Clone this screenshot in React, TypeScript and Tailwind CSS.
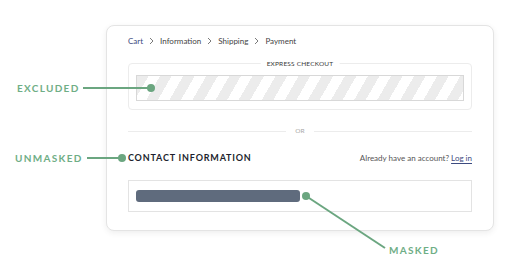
import React from 'react';

const Chevron: React.FC = () => (
  <svg width="5" height="8" viewBox="0 0 5 8" fill="none" stroke="#7a7a7a" strokeWidth="1" className="shrink-0">
    <path d="M1 1l3 3-3 3" />
  </svg>
);

const App: React.FC = () => {
  const steps = ['Information', 'Shipping', 'Payment'];

  return (
    <div className="relative w-[524px] h-[267px] overflow-hidden bg-white pl-[106px] pt-[25px] font-['Lato',sans-serif]">
      <div className="w-[388px] rounded-[8px] border border-[#e4e4e4] bg-white px-[21px] pt-[8px] pb-[18px] shadow-[0_2px_6px_rgba(0,0,0,0.07)]">
        <nav className="flex items-center gap-[6px] text-[8px] leading-[14px] text-[#444]">
          <span className="text-[#3d4b80]">Cart</span>
          {steps.map((step) => (
            <React.Fragment key={step}>
              <Chevron />
              <span>{step}</span>
            </React.Fragment>
          ))}
        </nav>

        <div className="relative mt-[15px] h-[47px] rounded-[4px] border border-[#ececec] px-[7px] pt-[11px]">
          <span className="absolute left-1/2 top-[-5px] -translate-x-1/2 bg-white px-[6px] text-[6.5px] leading-[9px] tracking-[0.03em] text-[#3a3a3a]">
            EXPRESS CHECKOUT
          </span>
          <div className="h-[26px] border border-[#d8d8d8] bg-[repeating-linear-gradient(120deg,#ececec_0px,#ececec_10px,#ffffff_10px,#ffffff_20px)]" />
        </div>

        <div className="mt-[16px] flex h-[10px] items-center gap-[9px]">
          <div className="h-px flex-1 bg-[#ececec]" />
          <span className="text-[6.5px] text-[#a8a8a8]">OR</span>
          <div className="h-px flex-1 bg-[#ececec]" />
        </div>

        <div className="mt-[15px] flex h-[14px] items-center justify-between">
          <h2 className="text-[9px] font-bold tracking-[0.09em] text-[#1d1f2e]">CONTACT INFORMATION</h2>
          <p className="text-[8px] text-[#555]">
            Already have an account?{' '}
            <a className="text-[#3d4b80] underline underline-offset-2">Log in</a>
          </p>
        </div>

        <div className="mt-[15px] flex h-[32px] items-center border border-[#e3e3e3] pl-[7px]">
          <div className="h-[12px] w-[164px] rounded-[3px] bg-[#5f6b7d]" />
        </div>
      </div>

      <svg className="pointer-events-none absolute inset-0" width="524" height="267" viewBox="0 0 524 267">
        <g stroke="#6ba680" strokeWidth="2" fill="#6ba680">
          <line x1="83" y1="88" x2="151" y2="88" />
          <circle cx="151" cy="88" r="4" stroke="none" />
          <line x1="87" y1="158" x2="122" y2="158" />
          <circle cx="122" cy="158" r="4" stroke="none" />
          <line x1="306" y1="196" x2="385" y2="248" />
          <circle cx="306" cy="196" r="4" stroke="none" />
        </g>
      </svg>

      <span className="absolute left-[17px] top-[81px] text-[10px] font-bold leading-[14px] tracking-[0.13em] text-[#6fae86]">EXCLUDED</span>
      <span className="absolute left-[15px] top-[151px] text-[10px] font-bold leading-[14px] tracking-[0.13em] text-[#6fae86]">UNMASKED</span>
      <span className="absolute left-[389px] top-[243px] text-[10px] font-bold leading-[14px] tracking-[0.13em] text-[#6fae86]">MASKED</span>
    </div>
  );
};

export default App;
